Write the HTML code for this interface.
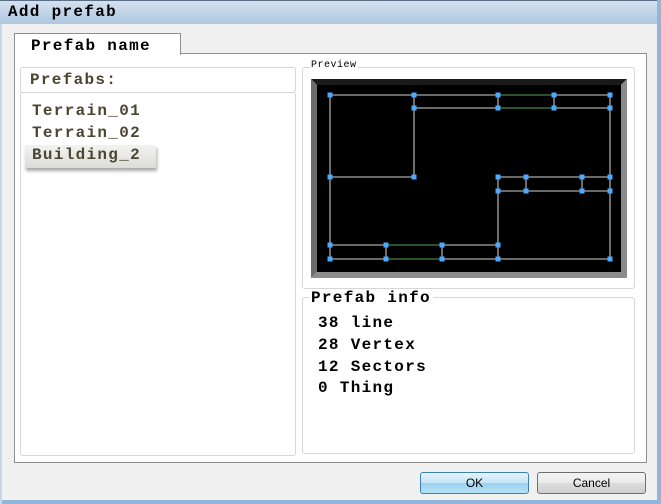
<!DOCTYPE html>
<html><head><style>
*{margin:0;padding:0;box-sizing:border-box}
body{width:661px;height:504px;background:#f0f0f0;position:relative;overflow:hidden;font-family:"Liberation Mono",monospace;}
.a{position:absolute}
.t{font-size:16px;letter-spacing:1.3px;color:#000;white-space:nowrap;font-weight:bold}
</style></head><body>
<div class="a" style="left:0;top:0;width:661px;height:24px;background:linear-gradient(#d4e1ef,#aec7e0);border-top:1px solid #5a6e85"></div>
<div class="a t" style="left:8px;top:3px;">Add prefab</div>
<div class="a" style="left:657px;top:0;width:4px;height:504px;background:#8fb7dc"></div>
<div class="a" style="left:0;top:500px;width:661px;height:4px;background:#8fb7dc"></div>
<div class="a" style="left:0;top:24px;width:2px;height:480px;background:#c6d6e6"></div>
<div class="a" style="left:14px;top:53px;width:633px;height:410px;background:#fff;border:1px solid #8e8f8f"></div>
<div class="a" style="left:14px;top:33px;width:167px;height:22px;background:#fff;border:1px solid #8e8f8f;border-bottom:none"></div>
<div class="a t" style="left:31px;top:37px;">Prefab name</div>
<div class="a" style="left:20px;top:67px;width:276px;height:26px;border:1px solid #d6d6d6;border-radius:3px;background:#fff"></div>
<div class="a t" style="left:30px;top:71px;color:#4a4630">Prefabs:</div>
<div class="a" style="left:20px;top:92px;width:276px;height:364px;border:1px solid #d6d6d6;border-radius:3px;background:#fff"></div>
<div class="a t" style="left:32px;top:102px;color:#4a4630">Terrain_01</div>
<div class="a t" style="left:32px;top:124px;color:#4a4630">Terrain_02</div>
<div class="a" style="left:25px;top:145px;width:131px;height:23px;background:linear-gradient(#f2f2f0,#dcdcd8);box-shadow:1px 3px 3px #aaa"></div>
<div class="a t" style="left:32px;top:146px;color:#4a4630">Building_2</div>
<div class="a" style="left:302px;top:67px;width:333px;height:222px;border:1px solid #d6d6d6;border-radius:3px"></div>
<div class="a" style="left:310px;top:60px;background:#fff;font-size:10px;padding:0 1px;letter-spacing:0.5px">Preview</div>
<svg class="a" style="left:311px;top:79px" width="317" height="200" viewBox="311 79 317 200">
<polygon points="311,79 627,79 621,85 317,85" fill="#1a1a1a"/>
<polygon points="627,79 627,278 621,272 621,85" fill="#8a8a8a"/>
<polygon points="311,79 317,85 317,272 311,278" fill="#6c6c6c"/>
<polygon points="311,278 627,278 621,272 317,272" fill="#8c8c8c"/>
<rect x="317" y="85" width="304" height="187" fill="#000"/>
<g stroke="#a8a8a8" stroke-width="1.3" fill="none">
<path d="M330 95H610M414 108H610M330 95V259M414 95V177M498 95V108M554 95V108M610 95V259M330 177H414M498 177H610M498 191H610M498 177V259M526 177V191M582 177V191M330 245H498M330 259H610M386 245V259M442 245V259"/>
</g>
<g stroke="#2e6a2e" stroke-width="1.3"><path d="M498 95H554M498 108H554M386 245H442M386 259H442"/></g>
<g fill="#4aaaff">
<rect x="327.5" y="92.5" width="5" height="5"/><rect x="411.5" y="92.5" width="5" height="5"/><rect x="495.5" y="92.5" width="5" height="5"/><rect x="551.5" y="92.5" width="5" height="5"/><rect x="607.5" y="92.5" width="5" height="5"/>
<rect x="411.5" y="105.5" width="5" height="5"/><rect x="495.5" y="105.5" width="5" height="5"/><rect x="551.5" y="105.5" width="5" height="5"/><rect x="607.5" y="105.5" width="5" height="5"/>
<rect x="327.5" y="174.5" width="5" height="5"/><rect x="411.5" y="174.5" width="5" height="5"/><rect x="495.5" y="174.5" width="5" height="5"/><rect x="523.5" y="174.5" width="5" height="5"/><rect x="579.5" y="174.5" width="5" height="5"/><rect x="607.5" y="174.5" width="5" height="5"/>
<rect x="495.5" y="188.5" width="5" height="5"/><rect x="523.5" y="188.5" width="5" height="5"/><rect x="579.5" y="188.5" width="5" height="5"/><rect x="607.5" y="188.5" width="5" height="5"/>
<rect x="327.5" y="242.5" width="5" height="5"/><rect x="383.5" y="242.5" width="5" height="5"/><rect x="439.5" y="242.5" width="5" height="5"/><rect x="495.5" y="242.5" width="5" height="5"/>
<rect x="327.5" y="256.5" width="5" height="5"/><rect x="383.5" y="256.5" width="5" height="5"/><rect x="439.5" y="256.5" width="5" height="5"/><rect x="495.5" y="256.5" width="5" height="5"/><rect x="607.5" y="256.5" width="5" height="5"/>
</g>
</svg>
<div class="a" style="left:302px;top:297px;width:333px;height:157px;border:1px solid #d6d6d6;border-radius:3px"></div>
<div class="a t" style="left:309px;top:289px;background:#fff;padding:0 2px">Prefab info</div>
<div class="a t" style="left:318px;top:314px">38 line</div>
<div class="a t" style="left:318px;top:336px">28 Vertex</div>
<div class="a t" style="left:318px;top:358px">12 Sectors</div>
<div class="a t" style="left:318px;top:379px">0 Thing</div>
<div class="a" style="left:420px;top:472px;width:109px;height:22px;border:1px solid #3c7fb1;border-radius:3px;background:linear-gradient(#e5f4fc 0%,#c4e5f6 50%,#98d1ef 51%,#b7e1f5 100%);font-family:'Liberation Sans',sans-serif;font-size:12px;text-align:center;line-height:20px">OK</div>
<div class="a" style="left:537px;top:472px;width:109px;height:22px;border:1px solid #707070;border-radius:3px;background:linear-gradient(#f2f2f2 0%,#ebebeb 50%,#dddddd 51%,#cfcfcf 100%);font-family:'Liberation Sans',sans-serif;font-size:12px;text-align:center;line-height:20px">Cancel</div>
</body></html>
